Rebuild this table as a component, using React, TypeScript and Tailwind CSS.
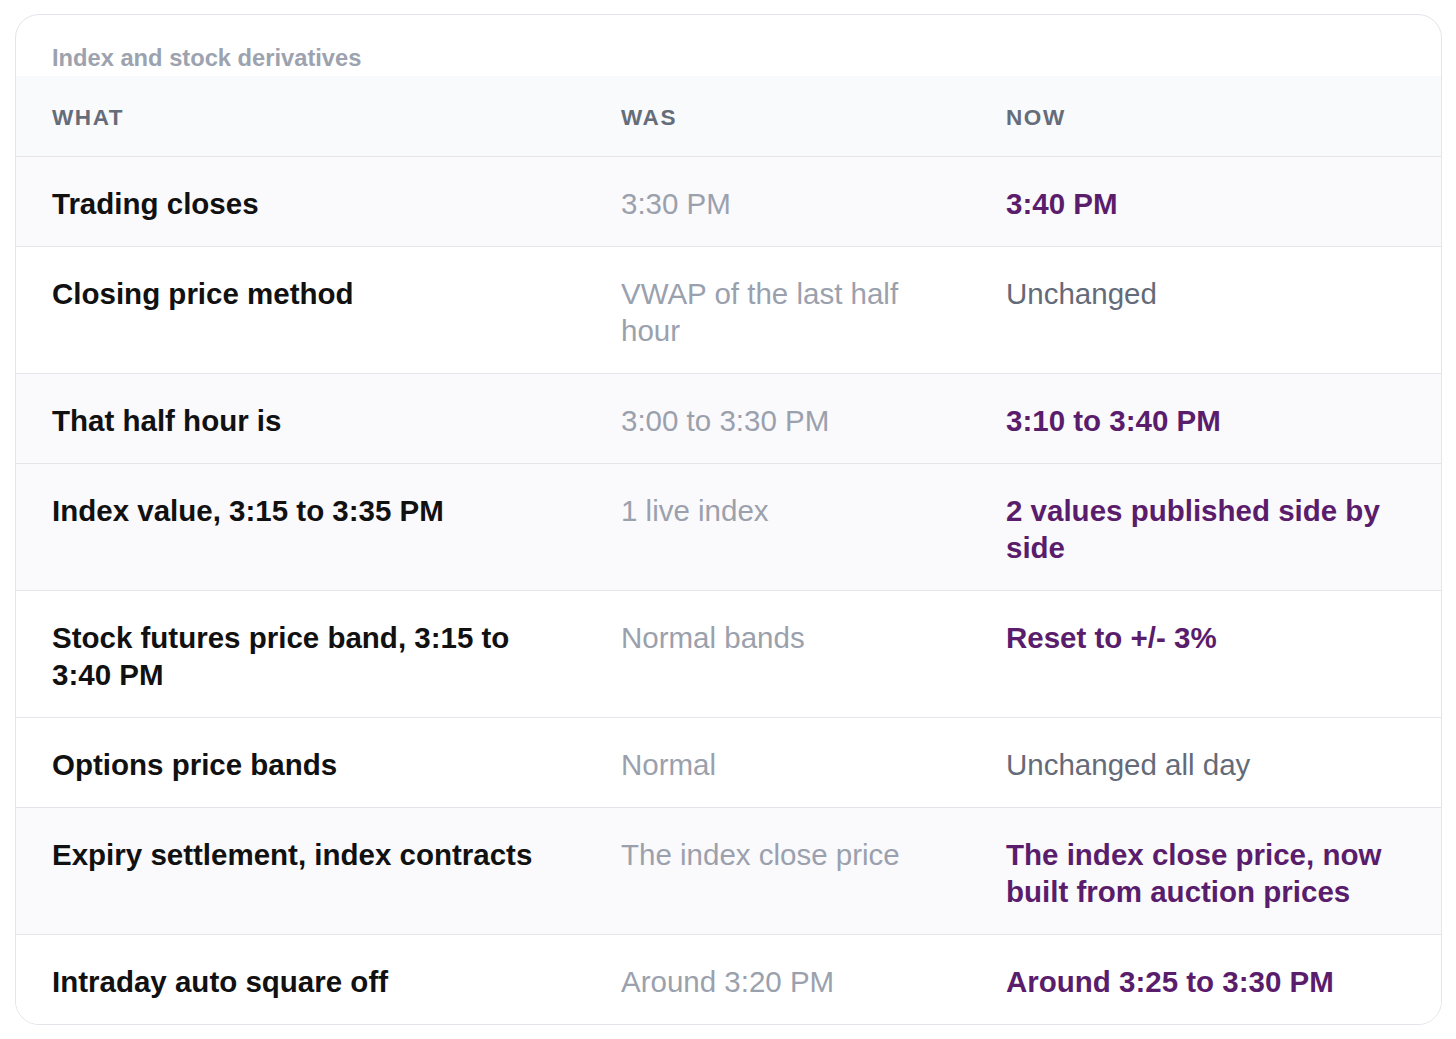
import React from 'react';

// Derivatives closing-session changes: what / was / now.
// tint = row carries the faint lilac background; changed = NOW is emphasised.

type Row = { what: string; was: string; now: string; changed: boolean; tint: boolean };

const rows: Row[] = [
  { what: 'Trading closes', was: '3:30 PM', now: '3:40 PM', changed: true, tint: true },
  { what: 'Closing price method', was: 'VWAP of the last half hour', now: 'Unchanged', changed: false, tint: false },
  { what: 'That half hour is', was: '3:00 to 3:30 PM', now: '3:10 to 3:40 PM', changed: true, tint: true },
  { what: 'Index value, 3:15 to 3:35 PM', was: '1 live index', now: '2 values published side by side', changed: true, tint: true },
  { what: 'Stock futures price band, 3:15 to 3:40 PM', was: 'Normal bands', now: 'Reset to +/- 3%', changed: true, tint: false },
  { what: 'Options price bands', was: 'Normal', now: 'Unchanged all day', changed: false, tint: false },
  {
    what: 'Expiry settlement, index contracts',
    was: 'The index close price',
    now: 'The index close price, now built from auction prices',
    changed: true,
    tint: true,
  },
  { what: 'Intraday auto square off', was: 'Around 3:20 PM', now: 'Around 3:25 to 3:30 PM', changed: true, tint: false },
];

export default function App() {
  return (
    <div
      className="min-h-screen bg-white pt-[14px] pl-[15px] pr-[14px] pb-[14px]"
      style={{ fontFamily: '"Liberation Sans", Arial, sans-serif' }}
    >
      <div className="overflow-hidden rounded-[24px] border border-[#e3e5ea] bg-white">
        <div className="px-[36px] pt-[28px] pb-[3px] text-[23.7px] font-bold leading-[30px] text-[#9ca3af]">
          Index and stock derivatives
        </div>
        <table className="w-full table-fixed border-collapse">
          <colgroup>
            <col className="w-[569px]" />
            <col className="w-[385px]" />
            <col />
          </colgroup>
          <thead>
            <tr className="bg-[#f9fafb] text-left">
              {['What', 'Was', 'Now'].map((h) => (
                <th
                  key={h}
                  className="px-[36px] pt-[28px] pb-[24px] text-[22.5px] font-bold uppercase leading-[28px] tracking-[0.07em] text-[#656c7a]"
                >
                  {h}
                </th>
              ))}
            </tr>
          </thead>
          <tbody>
            {rows.map((r) => (
              <tr
                key={r.what}
                className={`border-t border-[#e3e5ea] align-top ${r.tint ? 'bg-[#faf9fc]' : 'bg-white'}`}
              >
                <td className="px-[36px] pt-[28px] pb-[24px] text-[29.5px] font-bold leading-[37px] text-[#111111]">
                  {r.what}
                </td>
                <td className="px-[36px] pt-[28px] pb-[24px] text-[29.5px] leading-[37px] text-[#9aa1ad]">
                  {r.was}
                </td>
                <td
                  className={
                    r.changed
                      ? 'px-[36px] pt-[28px] pb-[24px] text-[29.5px] font-bold leading-[37px] text-[#5a1d6c]'
                      : 'px-[36px] pt-[28px] pb-[24px] text-[29.5px] leading-[37px] text-[#646b78]'
                  }
                >
                  {r.now}
                </td>
              </tr>
            ))}
          </tbody>
        </table>
      </div>
    </div>
  );
}
